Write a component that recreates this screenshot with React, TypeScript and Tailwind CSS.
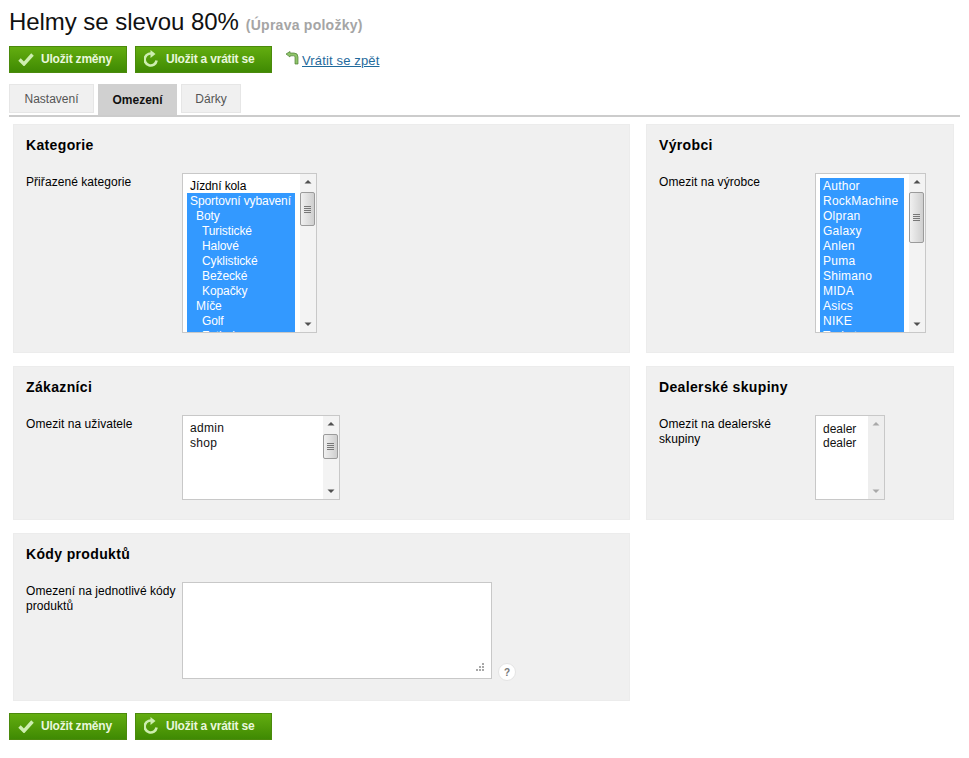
import React from "react";

function Check() {
  return (
    <svg width="16" height="14" viewBox="0 0 16 14" className="shrink-0">
      <path d="M1.5 7.5 L6 12 L14.5 2.5" fill="none" stroke="#cdeeb0" strokeWidth="3.4" />
    </svg>
  );
}

function Reload() {
  return (
    <svg width="14" height="18" viewBox="0 0 14 18" className="shrink-0">
      <path d="M9.5 4.2 A6 6 0 1 0 12.6 10.5" fill="none" stroke="#cdeeb0" strokeWidth="2.6" />
      <path d="M6.5 0 L11.5 4 L6.5 8 Z" fill="#cdeeb0" />
    </svg>
  );
}

function SaveButton({ label, icon, width, gap }: { label: string; icon: React.ReactNode; width: string; gap: string }) {
  return (
    <button
      className={`flex h-[27px] items-center border border-[#4b8a0c] bg-gradient-to-b from-[#63ad10] to-[#3f8a03] pb-[1px] pl-2 text-[12px] font-bold tracking-[-0.2px] text-[#e9f7dc] ${width} ${gap}`}
    >
      {icon}
      <span>{label}</span>
    </button>
  );
}

function Row({ children, indent, sel, track }: { children: string; indent?: number; sel?: boolean; track?: string }) {
  const pad = indent === 2 ? "pl-[15px]" : indent === 1 ? "pl-[9px]" : "pl-[3px]";
  return (
    <div className={`h-[15px] whitespace-nowrap text-[12px] leading-[17px] ${track ?? ""} ${pad} ${sel ? "bg-[#3399ff] text-white" : "text-black"}`}>
      {children}
    </div>
  );
}

function Scrollbar({ thumbTop, thumbH, disabled }: { thumbTop?: string; thumbH?: string; disabled?: boolean }) {
  const arrow = disabled ? "#a8a8a8" : "#505050";
  return (
    <div className={`relative w-[16px] shrink-0 ${disabled ? "bg-[#eeeeee]" : "bg-[#f3f3f3]"}`}>
      <svg width="16" height="16" viewBox="0 0 16 16" className="absolute left-0 top-0">
        <path d="M4.5 9.5 L8 6 L11.5 9.5 Z" fill={arrow} />
      </svg>
      <svg width="16" height="16" viewBox="0 0 16 16" className="absolute bottom-0 left-0">
        <path d="M4.5 6.5 L8 10 L11.5 6.5 Z" fill={arrow} />
      </svg>
      {!disabled && (
        <div className={`absolute left-0 flex w-[15px] flex-col items-center justify-center gap-[1px] rounded-[2px] border border-[#9b9b9b] bg-gradient-to-r from-[#f0f0f0] to-[#cfcfcf] ${thumbTop} ${thumbH}`}>
          <div className="h-px w-[7px] bg-[#777]" />
          <div className="h-px w-[7px] bg-[#777]" />
          <div className="h-px w-[7px] bg-[#777]" />
          <div className="h-px w-[7px] bg-[#777]" />
        </div>
      )}
    </div>
  );
}

function Panel({ title, children, className }: { title: string; children: React.ReactNode; className: string }) {
  return (
    <section className={`border border-[#ececec] bg-[#f0f0f0] px-3 pt-[11px] ${className}`}>
      <h2 className="text-[14px] font-bold leading-[18px] tracking-[0.35px] text-black">{title}</h2>
      <div className="mt-[19px] flex items-start">{children}</div>
    </section>
  );
}

function Label({ children }: { children: React.ReactNode }) {
  return <div className="w-[156px] shrink-0 pt-[2px] text-[12px] leading-[15px] tracking-[0.06px] text-black">{children}</div>;
}

const categories: [string, number, boolean][] = [
  ["Jízdní kola", 0, false],
  ["Sportovní vybavení", 0, true],
  ["Boty", 1, true],
  ["Turistické", 2, true],
  ["Halové", 2, true],
  ["Cyklistické", 2, true],
  ["Bežecké", 2, true],
  ["Kopačky", 2, true],
  ["Míče", 1, true],
  ["Golf", 2, true],
  ["Fotbal", 2, true],
];

const makers = ["Author", "RockMachine", "Olpran", "Galaxy", "Anlen", "Puma", "Shimano", "MIDA", "Asics", "NIKE", "Trekstar"];

const panelTabs = [
  { name: "Nastavení", cls: "w-[85px] h-[29px] bg-[#f0f0f0] border border-[#e6e6e6] font-normal text-[#555]" },
  { name: "Omezení", cls: "w-[79px] h-[31px] bg-[#d0d0d0] font-bold text-[#111]" },
  { name: "Dárky", cls: "w-[60px] h-[29px] bg-[#f0f0f0] border border-[#e6e6e6] font-normal text-[#555]" },
];

export default function App() {
  return (
    <div className="h-[758px] w-[969px] overflow-hidden bg-white px-[9px] font-['Liberation_Sans',Arial,sans-serif]">
      <h1 className="flex items-baseline pt-[7px] text-[24px] font-normal leading-[30px] tracking-[-0.05px] text-[#111]">
        Helmy se slevou 80%
        <span className="ml-[7px] text-[14px] font-bold tracking-[0.25px] text-[#a5a5a5]">(Úprava položky)</span>
      </h1>

      <div className="mt-[6px] flex items-center">
        <SaveButton label="Uložit změny" icon={<Check />} width="w-[118px]" gap="gap-[7px]" />
        <div className="w-2" />
        <SaveButton label="Uložit a vrátit se" icon={<Reload />} width="w-[137px]" gap="gap-[8px]" />
        <svg width="15" height="14" viewBox="0 0 15 14" className="ml-[13px] mt-[-4px] shrink-0">
          <path d="M1 3 L5 0.5 L5 2 L9 2 Q13 2 13 6 L13 13 L10 13 L10 6 Q10 4.8 8.6 4.8 L5 4.8 L5 6 Z" fill="#8fc46a" stroke="#4e7f33" strokeWidth="0.7" />
        </svg>
        <a className="ml-[2px] mt-[3px] text-[13px] leading-[16px] tracking-[0.15px] text-[#1f6a9c] underline">Vrátit se zpět</a>
      </div>

      <div className="mt-[11px] flex items-start gap-1 border-b-2 border-[#cccccc]">
        {panelTabs.map((t) => (
          <div key={t.name} className={`flex items-center justify-center text-[12px] ${t.cls}`}>
            {t.name}
          </div>
        ))}
      </div>

      <div className="ml-1 mt-[7px] grid w-[941px] grid-cols-[617px_308px] gap-x-4 gap-y-[13px]">
        <Panel title="Kategorie" className="h-[229px]">
          <Label>Přiřazené kategorie</Label>
          <div className="flex h-[160px] w-[135px] overflow-hidden border border-[#c8c8c8] bg-white">
            <div className="h-full w-[117px] overflow-hidden pl-1 pt-1">
              <div className="w-[108px]">
                {categories.map(([n, i, s]) => (
                  <Row key={n} indent={i} sel={s} track="tracking-[-0.1px]">{n}</Row>
                ))}
              </div>
            </div>
            <Scrollbar thumbTop="top-[18px]" thumbH="h-[34px]" />
          </div>
        </Panel>

        <Panel title="Výrobci" className="h-[229px]">
          <Label>Omezit na výrobce</Label>
          <div className="flex h-[160px] w-[111px] overflow-hidden border border-[#c8c8c8] bg-white">
            <div className="h-full w-[93px] overflow-hidden pl-1 pt-1">
              <div className="w-[84px]">
                {makers.map((n) => (
                  <Row key={n} sel track="tracking-[0.25px]">{n}</Row>
                ))}
              </div>
            </div>
            <Scrollbar thumbTop="top-[18px]" thumbH="h-[51px]" />
          </div>
        </Panel>

        <Panel title="Zákazníci" className="h-[154px]">
          <Label>Omezit na uživatele</Label>
          <div className="flex h-[85px] w-[158px] overflow-hidden border border-[#c8c8c8] bg-white">
            <div className="h-full w-[140px] pl-[7px] pt-[5px] text-[12px] leading-[15px] tracking-[0.3px] text-[#111]">
              <div>admin</div>
              <div>shop</div>
            </div>
            <Scrollbar thumbTop="top-[18px]" thumbH="h-[25px]" />
          </div>
        </Panel>

        <Panel title="Dealerské skupiny" className="h-[154px]">
          <Label>
            <div className="w-[130px] tracking-[0.1px]">Omezit na dealerské skupiny</div>
          </Label>
          <div className="flex h-[85px] w-[70px] overflow-hidden border border-[#c8c8c8] bg-white">
            <div className="h-full w-[52px] pl-[7px] pt-[6px] text-[12px] leading-[14px] text-[#111]">
              <div>dealer</div>
              <div>dealer</div>
            </div>
            <Scrollbar disabled />
          </div>
        </Panel>

        <Panel title="Kódy produktů" className="h-[168px]">
          <Label>
            <div className="w-[152px]">Omezení na jednotlivé kódy produktů</div>
          </Label>
          <div className="relative h-[97px] w-[310px] shrink-0 border border-[#c8c8c8] bg-white">
            <svg width="12" height="12" viewBox="0 0 12 12" className="absolute bottom-[4px] right-[6px]">
              <g fill="#a8a8a8">
                <rect x="9" y="1" width="2" height="2" />
                <rect x="6" y="4" width="2" height="2" />
                <rect x="9" y="4" width="2" height="2" />
                <rect x="3" y="7" width="2" height="2" />
                <rect x="6" y="7" width="2" height="2" />
                <rect x="9" y="7" width="2" height="2" />
              </g>
            </svg>
          </div>
          <div className="ml-[6px] mt-[81px] flex size-[18px] shrink-0 items-center justify-center rounded-full border border-[#e4e4e4] bg-white text-[10px] font-bold text-[#777]">
            ?
          </div>
        </Panel>
      </div>

      <div className="mt-3 flex items-center gap-2">
        <SaveButton label="Uložit změny" icon={<Check />} width="w-[118px]" gap="gap-[7px]" />
        <SaveButton label="Uložit a vrátit se" icon={<Reload />} width="w-[137px]" gap="gap-[8px]" />
      </div>
    </div>
  );
}
